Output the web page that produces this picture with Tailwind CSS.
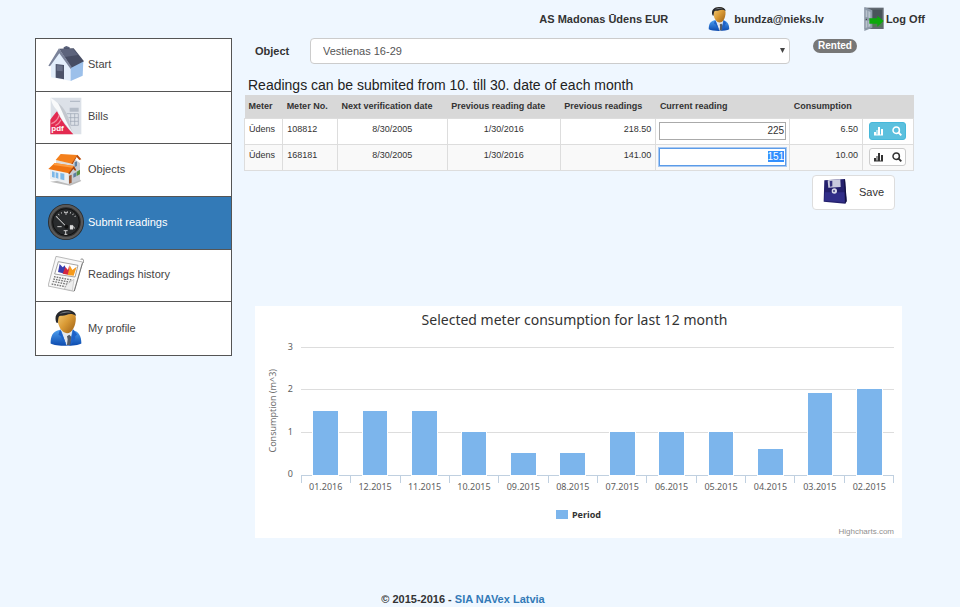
<!DOCTYPE html>
<html lang="en">
<head>
  <meta charset="UTF-8" />
  <meta name="viewport" content="width=device-width, initial-scale=1.0" />
  <title>Submit readings</title>
  <script src="https://cdn.jsdelivr.net/npm/@tailwindcss/browser@4"></script>
</head>
<body class="bg-[#eff7ff] min-h-screen flex flex-col font-['Liberation_Sans',Arial,sans-serif] text-[11px] leading-4 text-[#333]">

  <!-- shared icons -->
  <svg class="absolute size-0">
    <defs>
      <linearGradient id="skin" x1="0" x2="1" y1="0" y2="1"><stop offset="0" stop-color="#f5cf7c" /><stop offset=".5" stop-color="#d99a35" /><stop offset="1" stop-color="#9a5c12" /></linearGradient>
      <linearGradient id="suit" x1="0" x2="0" y1="0" y2="1"><stop offset="0" stop-color="#4ea0f0" /><stop offset="1" stop-color="#0b49ae" /></linearGradient>
      <symbol id="user" viewBox="63 360 94 110">
        <path d="M63 462c0-22 6-36 26-41l22 8 18-8c20 4 28 18 28 41-16 10-78 10-94 0z" fill="url(#suit)" />
        <path d="M94 418l17 50h9l10-48-14 8z" fill="#e4e8ee" />
        <path d="M113 440l7-4 6 6-3 25h-10l2-18z" fill="#555b66" />
        <path d="M92 418l20 50-15-20-2-8-8-4zM131 418l-7 50 14-20v-8l6-5z" fill="#1f62c8" />
        <path d="M84 384c0-16 12-23 28-23s28 9 28 25c0 22-11 45-27 45-15 0-29-21-29-47z" fill="url(#skin)" />
        <path d="M80 398c-8-24 8-38 30-38 17 0 29 6 31 18-10-7-20-7-30-3-9 4-16 1-22 4-3 5-3 12-4 21z" fill="#26282c" />
        <path d="M90 372c8-9 28-10 38-4-14-1-24 1-38 4z" fill="#777c82" />
      </symbol>
      <symbol id="bars" viewBox="0 0 10 10">
        <path d="M0 6h2v3H0zM2.500 4h1v5h-1zM4 1h2v8H4zM7 3h2v6H7zM0 8.500h9v1H0z" fill="currentColor" />
      </symbol>
      <symbol id="search" viewBox="0 0 10 10">
        <circle cx="4.200" cy="4.200" r="3.200" fill="none" stroke="currentColor" stroke-width="1.500" />
        <path d="M6.600 6.600L9.300 9.300" stroke="currentColor" stroke-width="1.900" />
      </symbol>
    </defs>
  </svg>

  <header class="h-[38px] pr-[35px] flex items-center justify-end gap-10 font-bold">
    <span>AS Madonas Ūdens EUR</span>
    <a href="#" class="flex items-center gap-1">
      <svg class="w-[22px] h-6"><use href="#user" /></svg>
      bundza@nieks.lv
    </a>
    <a href="#" class="flex items-center gap-0.5">
      <svg class="w-5 h-6" viewBox="0 0 60 72">
        <path d="M2 2h57v64H2z" fill="#626a72" />
        <path d="M20 8h34v50H20z" fill="#49545a" />
        <path d="M22 42h34v18H22z" fill="#527a58" />
        <path d="M1 0l24 10v52L1 72z" fill="#8d99a8" />
        <path d="M5 8l5 3v20l-5-1zM13 12l6 3v18l-6-1zM5 42l5-1v20l-5 2zM13 41l6-1v18l-6 2z" fill="#bac4ce" />
        <circle cx="7" cy="37" r="2" fill="#333" />
        <path d="M16 34h24v-8l19 16-19 17v-9H16z" fill="#0ca80c" />
      </svg>
      Log Off
    </a>
  </header>

  <div class="flex items-start gap-3 pl-[35px] pr-[46px]">
    <nav class="w-[197px] h-[318px] shrink-0 grid auto-rows-fr bg-white border border-[#555] divide-y divide-[#555] text-[#444]">
      <a href="#" class="pl-3 pb-0.5 flex items-center gap-1">
        <svg class="size-9" viewBox="54 48 108 108">
          <path d="M101 60V52l8-4 10 4v14z" fill="#59617a" />
          <path d="M63 103L88 66l36 44v43l-61-11z" fill="#e3eefb" />
          <path d="M122 110l38-17-2 44-36 16z" fill="#9cc0ea" />
          <path d="M77 102l25 3v43l-25-5z" fill="#4b5269" />
          <path d="M80 105l18 2v17l-18-2z" fill="#697189" />
          <path d="M88 56l43-1 31 39-38 19z" fill="#474d63" />
          <path d="M90 57l40 0 14 18-40 6z" fill="#5d647c" />
          <path d="M55 107l32-52 38 56-3 6-34-47-28 39z" fill="#7b839a" />
        </svg>
        Start
      </a>
      <a href="#" class="pl-3 pb-0.5 flex items-center gap-1">
        <svg class="size-9 overflow-visible" viewBox="54 205 108 108">
          <path d="M62 204h92v110H62z" fill="#dce1e8" />
          <path d="M120 213h30v4h-30zM119 234h27v12h-27z" fill="#b4bcc7" />
          <path d="M110 252h35v35h-35M110 264h35M110 275h35M122 252v35M134 252v35" fill="none" stroke="#9ba5b2" stroke-width="2" />
          <path d="M61 314v-44c8-10 15-20 20-25 12 26 35 56 49 69z" fill="#e32a50" />
          <path d="M64 282c12-4 20-14 24-26M76 288c8-4 14-11 17-18" stroke="#f38aa0" stroke-width="4" fill="none" />
          <path d="M62 204c24 16 50 40 56 69 2 15 7 27 12 37-24-24-40-48-47-66-8-10-18-20-21-40z" fill="#f9fafb" />
          <path d="M84 220c18 14 30 34 34 53 2 15 7 27 12 37-20-24-29-58-46-90z" fill="#c3c8cf" />
          <text x="64" y="305" font-size="24" font-weight="bold" fill="#fff">pdf</text>
        </svg>
        Bills
      </a>
      <a href="#" class="pl-3 pb-0.5 flex items-center gap-1">
        <svg class="size-9" viewBox="54 366 108 108">
          <path d="M60 458l60 12 34-14-8-8z" fill="#bbb" />
          <path d="M60 420l58 10v36l-58-16z" fill="#eceff2" />
          <path d="M116 428l20-36 14 10v52l-34 12z" fill="#c9ccd2" />
          <path d="M66 427l8 2v17l-8-2zM77 430l8 2v17l-8-3zM91 432l12 2v20l-12-3z" fill="#7db8e8" />
          <path d="M117 440l8-3v24l-8 3z" fill="#9a5c3b" />
          <path d="M134 400l7-3v14l-7 3zM130 434l9-4v12l-9 4z" fill="#5c7f9f" />
          <path d="M140 428l10-6v14l-10 5z" fill="#528f3e" />
          <path d="M78 394l50 8v12l-50-8z" fill="#ddd" />
          <path d="M77 393l15-18 50 3-16 26z" fill="#f4801c" />
          <path d="M142 377l12 14-6 2-8-9-12 22-4-2z" fill="#b94b09" />
          <path d="M55 420l19-18 58 9-15 22z" fill="#ef7412" />
          <path d="M74 402l58 9-4 5-59-8z" fill="#ff9b3e" />
          <path d="M132 411l7 13-4 1-5-5-12 16-3-3z" fill="#a84308" />
        </svg>
        Objects
      </a>
      <a href="#" class="pl-3 pb-0.5 flex items-center gap-1 bg-[#337ab7] text-white">
        <svg class="size-9" viewBox="54 43 108 108">
          <circle cx="108" cy="97" r="54" fill="#2a2a2a" />
          <circle cx="108" cy="97" r="48" fill="none" stroke="#585858" stroke-width="7" />
          <circle cx="108" cy="97" r="40" fill="#292b2d" stroke="#111" stroke-width="3" />
          <path d="M80 82a34 34 0 0 1 56-1" fill="none" stroke="#ddd" stroke-width="5" stroke-dasharray="2 7" />
          <path d="M108 66v10M103 69h10" stroke="#eee" stroke-width="2" />
          <path d="M79 81l29 29" stroke="#e8e8e8" stroke-width="3" />
          <circle cx="109" cy="111" r="6" fill="#111" />
          <path d="M82 111h13M101 123h12M107 123v12M103 134h9" stroke="#ccc" stroke-width="3" />
          <path d="M120 107h9v12h-9zM129 110l4 2v6" fill="#ddd" stroke="#ddd" stroke-width="1" />
        </svg>
        Submit readings
      </a>
      <a href="#" class="pl-3 pb-0.5 flex items-center gap-1">
        <svg class="size-9" viewBox="54 202 108 108">
          <path d="M78 203l80 17-26 88-78-16z" fill="#f8f8f8" stroke="#999" stroke-width="2" />
          <path d="M152 212c10-4 12 8 5 13l-24 82" fill="none" stroke="#777" stroke-width="3" />
          <path d="M85 219l59 11-9 35-61-9z" fill="#fff" stroke="#777" stroke-width="2" />
          <path d="M84 250l5-24 9 10 7-6 2 26z" fill="#3a3fae" />
          <path d="M98 255l8-20 8 9 4-15 3 31z" fill="#d5263f" />
          <path d="M113 259l7-28 7 13 13-10-9 27z" fill="#f59a1c" />
          <path d="M72 264l52 10M70 271l52 10M68 278l45 9M65 286l42 8" stroke="#777" stroke-width="4" stroke-dasharray="5 3" />
          <path d="M132 272l-5 34-24-5 9-16z" fill="#eee" stroke="#888" stroke-width="1" />
        </svg>
        Readings history
      </a>
      <a href="#" class="pl-3 pb-0.5 flex items-center gap-1">
        <svg class="size-9"><use href="#user" /></svg>
        My profile
      </a>
    </nav>

    <main class="flex-1 min-w-0">
      <div class="flex items-start pl-[11px]">
        <label for="object" class="w-[55px] leading-[26px] font-bold">Object</label>
        <div class="relative flex-1">
          <select id="object" class="w-full h-[26px] px-3 appearance-none bg-white border border-[#ccc] rounded text-[#555]">
            <option>Vestienas 16-29</option>
          </select>
          <svg class="absolute right-[5px] top-[10px] w-[5px] h-[5px] pointer-events-none" viewBox="0 0 6 6"><path d="M0 0h6L3 6z" fill="#444" /></svg>
        </div>
        <div class="w-[124px] pl-[23px] pt-px">
          <span class="block w-fit px-[5px] leading-[14px] rounded-full bg-[#777] text-white text-[10px] font-bold">Rented</span>
        </div>
      </div>

      <h1 class="mt-3 pl-1 text-[14px] leading-[19px] text-[#222]">Readings can be submited from 10. till 30. date of each month</h1>

      <table class="w-full table-fixed border-collapse text-[9px] leading-3">
        <colgroup>
          <col class="w-[5.7%]" /><col class="w-[8.2%]" /><col class="w-[16.4%]" /><col class="w-[16.9%]" /><col class="w-[14.3%]" /><col class="w-[20%]" /><col class="w-[10.9%]" /><col class="w-[7.6%]" />
        </colgroup>
        <thead>
          <tr class="h-[23px] bg-[#d8d8d8] text-left whitespace-nowrap">
            <th class="px-1">Meter</th>
            <th class="px-1">Meter No.</th>
            <th class="px-1">Next verification date</th>
            <th class="px-1">Previous reading date</th>
            <th class="px-1">Previous readings</th>
            <th class="px-1">Current reading</th>
            <th class="px-1">Consumption</th>
            <th></th>
          </tr>
        </thead>
        <tbody>
          <tr class="h-[26px] bg-white align-top">
            <td class="border border-[#ddd] px-1 py-1">Ūdens</td>
            <td class="border border-[#ddd] px-1 py-1">108812</td>
            <td class="border border-[#ddd] px-1 py-1 text-center">8/30/2005</td>
            <td class="border border-[#ddd] px-1 py-1 text-center">1/30/2016</td>
            <td class="border border-[#ddd] px-1 py-1 text-right">218.50</td>
            <td class="border border-[#ddd] px-[3px] pt-[3px]"><input type="text" value="225" aria-label="Current reading 108812" class="block w-full h-[18px] px-px border border-[#aaa] bg-white text-right text-[10px]" /></td>
            <td class="border border-[#ddd] px-1 py-1 text-right">6.50</td>
            <td class="border border-[#ddd] px-1.5 pt-[3px]">
              <button aria-label="Show chart 108812" class="flex items-center justify-center gap-2 w-[37px] h-[18px] rounded-[3px] border border-[#46b8da] bg-[#5bc0de] text-white">
                <svg class="size-[10px]"><use href="#bars" /></svg>
                <svg class="size-[10px]"><use href="#search" /></svg>
              </button>
            </td>
          </tr>
          <tr class="h-[26px] bg-[#f9f9f9] align-top">
            <td class="border border-[#ddd] px-1 py-1">Ūdens</td>
            <td class="border border-[#ddd] px-1 py-1">168181</td>
            <td class="border border-[#ddd] px-1 py-1 text-center">8/30/2005</td>
            <td class="border border-[#ddd] px-1 py-1 text-center">1/30/2016</td>
            <td class="border border-[#ddd] px-1 py-1 text-right">141.00</td>
            <td class="border border-[#ddd] px-[3px] pt-[3px]"><input type="text" value="151" id="current" aria-label="Current reading 168181" class="block w-full h-[18px] px-px border border-[#5b9be8] outline-1 outline-[#a9c9f2] bg-white text-right text-[10px] selection:bg-[#3390ff] selection:text-white" /></td>
            <td class="border border-[#ddd] px-1 py-1 text-right">10.00</td>
            <td class="border border-[#ddd] px-1.5 pt-[3px]">
              <button aria-label="Show chart 168181" class="flex items-center justify-center gap-2 w-[37px] h-[18px] rounded-[3px] border border-[#ccc] bg-white">
                <svg class="size-[10px]"><use href="#bars" /></svg>
                <svg class="size-[10px]"><use href="#search" /></svg>
              </button>
            </td>
          </tr>
        </tbody>
      </table>

      <div class="flex justify-end mt-1 pr-[19px]">
        <button class="flex items-center gap-3 h-[35px] px-[10px] pb-px bg-white border border-[#ddd] rounded">
          <svg class="w-6 h-[25px]" viewBox="0 0 72 75">
            <path d="M4 4l62-4 5 66-4 8-65-6z" fill="#24206c" />
            <path d="M66 0l5 66-4 8-4-70z" fill="#12103f" />
            <path d="M6 40l58 0 1 30-61-5z" fill="#312e88" />
            <path d="M14 4l38-3 1 23-37 2z" fill="#c9cbdd" />
            <path d="M20 6l8-1v17l-7 1z" fill="#37347e" />
            <circle cx="34" cy="36" r="8" fill="#d8dae8" />
            <circle cx="33" cy="36" r="3" fill="#444285" />
          </svg>
          Save
        </button>
      </div>

      <section class="mt-24 ml-[11px] mr-3 pt-1 pr-2 bg-white font-['Noto_Sans','Open_Sans',sans-serif] text-[9px] leading-3 text-[#606060]">
        <h2 class="text-center text-[14px] leading-5 text-[#333]">Selected meter consumption for last 12 month</h2>
        <div class="flex mt-[11px]">
          <div class="w-[38px] pl-3 h-[140px] flex items-center justify-between">
            <span class="rotate-180 [writing-mode:vertical-rl] whitespace-nowrap text-[#707070]">Consumption (m^3)</span>
            <div class="h-full flex flex-col justify-between">
              <span>3</span><span>2</span><span>1</span><span>0</span>
            </div>
          </div>
          <div class="flex-1 ml-2 pt-[6px]">
            <div class="relative h-32">
              <div class="absolute inset-0 grid grid-rows-3">
                <div class="border-t border-[#ddd]"></div>
                <div class="border-t border-[#ddd]"></div>
                <div class="border-t border-[#ddd]"></div>
              </div>
              <div id="columns" class="relative h-full grid grid-cols-12 items-end justify-items-center"></div>
            </div>
            <div id="months" class="grid grid-cols-12 border-t border-r border-[#c0d0e0] h-2"></div>
            <div id="labels" class="grid grid-cols-12 text-center -mt-0.5"></div>
          </div>
        </div>
        <div class="mt-4 flex items-center justify-center gap-1 pl-2 font-bold text-[#333]">
          <span class="w-3 h-[9px] bg-[#7cb5ec]"></span>Period
        </div>
        <div class="mt-[5px] font-['Liberation_Sans',Arial,sans-serif] text-right text-[8px] text-[#909090]"><a href="#">Highcharts.com</a></div>
      </section>
    </main>
  </div>

  <footer class="mt-auto pr-[34px] text-center font-bold">© 2015-2016 - <a href="#" class="text-[#337ab7]">SIA NAVex Latvia</a></footer>

  <script>
    const readings = [
      ["01.2016", 1.5], ["12.2015", 1.5], ["11.2015", 1.5], ["10.2015", 1],
      ["09.2015", 0.5], ["08.2015", 0.5], ["07.2015", 1], ["06.2015", 1],
      ["05.2015", 1], ["04.2015", 0.6], ["03.2015", 1.9], ["02.2015", 2]
    ];
    const max = 3;

    document.getElementById("columns").innerHTML = readings.map(([, value]) =>
      `<div class="w-1/2 bg-[#7cb5ec] outline-1 outline-white" style="height: ${value / max * 100}%"></div>`
    ).join("");
    document.getElementById("months").innerHTML = readings.map(() =>
      `<div class="border-l border-[#c0d0e0]"></div>`
    ).join("");
    document.getElementById("labels").innerHTML = readings.map(([month]) =>
      `<span>${month}</span>`
    ).join("");

    const current = document.getElementById("current");
    current.focus();
    current.select();
  </script>
</body>
</html>
